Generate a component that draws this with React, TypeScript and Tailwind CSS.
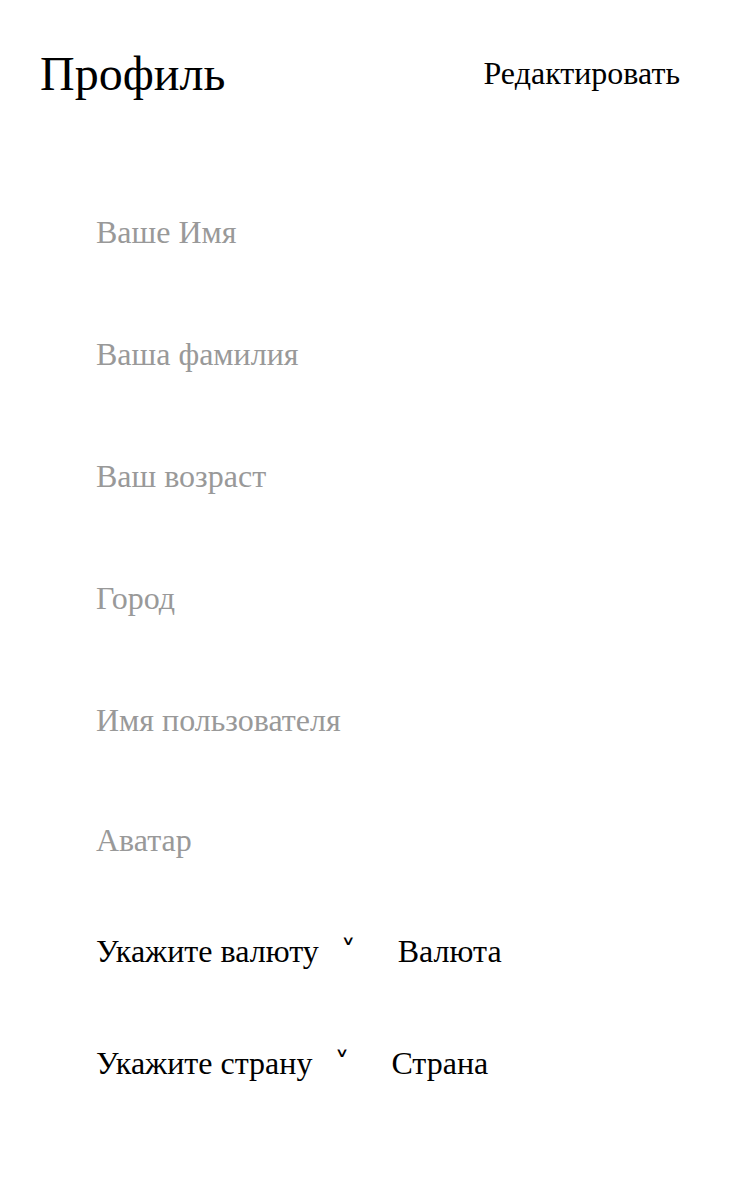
import React from "react";

const fields = [
  "Ваше Имя",
  "Ваша фамилия",
  "Ваш возраст",
  "Город",
];

const App = () => {
  return (
    <div className="min-h-[1186px] bg-white font-['Liberation_Serif',serif] text-black">
      <div className="flex items-center justify-between pl-[40px] pr-[70px] pt-[48px]">
        <h1 className="text-[48px] leading-[52px]">Профиль</h1>
        <button className="text-[32px] leading-[48px] mt-[-2px]">Редактировать</button>
      </div>
      <div className="flex flex-col px-[96px] pt-[108px]">
        {fields.map((f) => (
          <div key={f} className="h-[122px] text-[32px] leading-[48px] text-[#999999]">
            {f}
          </div>
        ))}
        <div className="h-[120px] text-[32px] leading-[48px] text-[#999999]">Имя пользователя</div>
        <div className="h-[111px] text-[32px] leading-[48px] text-[#999999]">Аватар</div>
        <div className="flex h-[112px] items-start text-[32px] leading-[48px]">
          <span>Укажите валюту</span>
          <span className="ml-[22px] mt-[1px] font-['DejaVu_Sans',sans-serif] text-[30px]">˅</span>
          <span className="ml-[42px]">Валюта</span>
        </div>
        <div className="flex items-start text-[32px] leading-[48px]">
          <span>Укажите страну</span>
          <span className="ml-[22px] mt-[1px] font-['DejaVu_Sans',sans-serif] text-[30px]">˅</span>
          <span className="ml-[42px]">Страна</span>
        </div>
      </div>
    </div>
  );
};

export default App;
